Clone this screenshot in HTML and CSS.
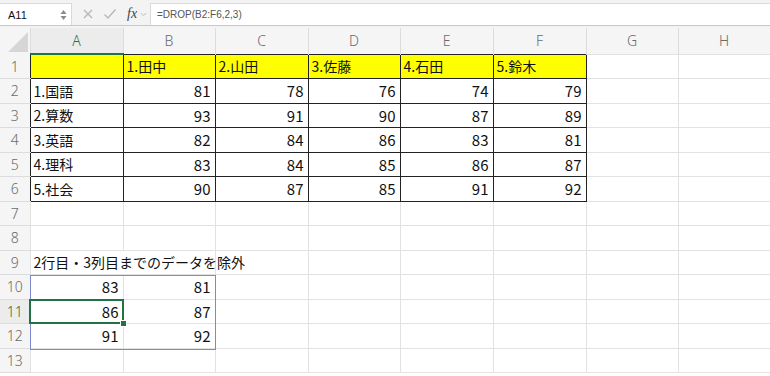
FILE: index.html
```html
<!DOCTYPE html>
<html lang="ja">
<head>
<meta charset="utf-8">
<link rel="stylesheet" href="styles.css">
</head>
<body>
<div class="toolbar">
  <div class="namebox"><span class="ref">A11</span><svg class="spin" width="7" height="12" viewBox="0 0 7 12"><path d="M3.5 1 L6.5 5 L0.5 5 Z M0.5 7 L6.5 7 L3.5 11 Z" fill="#8a8a8a"/></svg></div>
  <div class="icons">
    <svg class="ico" width="12" height="12" viewBox="0 0 12 12"><path d="M2 2 L10 10 M10 2 L2 10" stroke="#b8b8b8" stroke-width="1.4" fill="none"/></svg>
    <svg class="ico" width="14" height="12" viewBox="0 0 14 12"><path d="M1.5 6.5 L5 10 L12.5 1.5" stroke="#b8b8b8" stroke-width="1.4" fill="none"/></svg>
    <span class="fx">fx</span>
    <svg class="chev" width="7" height="5" viewBox="0 0 7 5"><path d="M1 1 L3.5 3.8 L6 1" stroke="#c0c0c0" stroke-width="1" fill="none"/></svg>
  </div>
  <div class="formula">=DROP(B2:F6,2,3)</div>
</div>
<div class="sheet">
<table class="grid">
  <colgroup>
    <col class="c-rh"><col class="c-w93"><col class="c-w92"><col class="c-w93"><col class="c-w92"><col class="c-w93"><col class="c-w93"><col class="c-w92"><col class="c-w92">
  </colgroup>
  <tr class="hdr">
    <th class="corner"><svg width="30" height="26" viewBox="0 0 30 26"><path d="M8 24 L28 24 L28 4 Z" fill="#d6d6d6"/></svg></th>
    <th class="act">A</th><th>B</th><th>C</th><th>D</th><th>E</th><th>F</th><th>G</th><th>H</th>
  </tr>
  <tr><th class="rh">1</th><td class="y b"></td><td class="y b">1.田中</td><td class="y b">2.山田</td><td class="y b">3.佐藤</td><td class="y b">4.石田</td><td class="y b">5.鈴木</td><td></td><td></td></tr>
  <tr><th class="rh">2</th><td class="b">1.国語</td><td class="b n">81</td><td class="b n">78</td><td class="b n">76</td><td class="b n">74</td><td class="b n">79</td><td></td><td></td></tr>
  <tr><th class="rh">3</th><td class="b">2.算数</td><td class="b n">93</td><td class="b n">91</td><td class="b n">90</td><td class="b n">87</td><td class="b n">89</td><td></td><td></td></tr>
  <tr><th class="rh">4</th><td class="b">3.英語</td><td class="b n">82</td><td class="b n">84</td><td class="b n">86</td><td class="b n">83</td><td class="b n">81</td><td></td><td></td></tr>
  <tr><th class="rh">5</th><td class="b">4.理科</td><td class="b n">83</td><td class="b n">84</td><td class="b n">85</td><td class="b n">86</td><td class="b n">87</td><td></td><td></td></tr>
  <tr><th class="rh">6</th><td class="b">5.社会</td><td class="b n">90</td><td class="b n">87</td><td class="b n">85</td><td class="b n">91</td><td class="b n">92</td><td></td><td></td></tr>
  <tr><th class="rh">7</th><td></td><td></td><td></td><td></td><td></td><td></td><td></td><td></td></tr>
  <tr><th class="rh">8</th><td></td><td></td><td></td><td></td><td></td><td></td><td></td><td></td></tr>
  <tr><th class="rh">9</th><td class="over"><span>2行目・3列目までのデータを除外</span></td><td class="nl"></td><td></td><td></td><td></td><td></td><td></td><td></td></tr>
  <tr><th class="rh">10</th><td class="n">83</td><td class="n">81</td><td></td><td></td><td></td><td></td><td></td><td></td></tr>
  <tr><th class="rh act">11</th><td class="n">86</td><td class="n">87</td><td></td><td></td><td></td><td></td><td></td><td></td></tr>
  <tr><th class="rh">12</th><td class="n">91</td><td class="n">92</td><td></td><td></td><td></td><td></td><td></td><td></td></tr>
  <tr><th class="rh">13</th><td></td><td></td><td></td><td></td><td></td><td></td><td></td><td></td></tr>
</table>
<div class="spill"></div>
<div class="active"><span class="handle"></span></div>
</div>
</body>
</html>
```
FILE: styles.css
```css
html, body {
  margin: 0;
  padding: 0;
  background: #ffffff;
  overflow: hidden;
}
body {
  width: 770px;
  height: 376px;
  font-family: "Noto Sans CJK JP", "Noto Sans", sans-serif;
}
.toolbar {
  background: #f3f3f3;
  border-bottom: 1px solid #c9c9c9;
  box-shadow: 0 2px 0 #f3f3f3, 0 3px 0 #d4d4d4;
  display: flex;
  align-items: stretch;
  padding-top: 3px;
  box-sizing: border-box;
  height: 26px;
  margin-bottom: 2px;
}
.namebox {
  width: 72px;
  background: #fff;
  border-top: 1px solid #dadada;
  border-right: 1px solid #dadada;
  display: flex;
  align-items: center;
  justify-content: space-between;
  box-sizing: border-box;
  padding: 0 4px 0 8px;
}
.ref {
  font-family: "Liberation Sans", sans-serif;
  font-size: 11px;
  color: #111;
}
.spin {
  display: block;
}
.icons {
  width: 78px;
  display: flex;
  align-items: center;
  padding-left: 10px;
  gap: 9px;
  box-sizing: border-box;
}
.fx {
  font-family: "Liberation Serif", serif;
  font-style: italic;
  font-size: 14px;
  color: #444;
  margin-left: 1px;
}
.chev {
  margin-left: -6px;
}
.formula {
  flex: 1;
  background: #fff;
  border-top: 1px solid #dadada;
  border-left: 1px solid #dadada;
  font-family: "Liberation Sans", sans-serif;
  font-size: 10px;
  color: #555;
  display: flex;
  align-items: center;
  padding-left: 6px;
}
.sheet {
  position: relative;
}
.grid {
  border-collapse: collapse;
  table-layout: fixed;
  width: 770px;
}
.c-rh { width: 30px; }
.c-w93 { width: 93px; }
.c-w92 { width: 92px; }
.hdr th {
  height: 25px;
  background: #f5f5f5;
  font-weight: 300;
  font-family: "Noto Sans", sans-serif;
  font-size: 14px;
  color: #6a6a6a;
  border-right: 1px solid #dcdcdc;
  border-bottom: none;
  padding: 0;
  text-align: center;
}
.hdr th.act {
  color: #217346;
  border-bottom: 2px solid #217346;
  background: #ececec;
}
.corner {
  padding: 0;
  vertical-align: bottom;
}
.corner svg {
  display: block;
}
tr {
  height: 24.5px;
}
td {
  padding: 0 3px;
  font-size: 14px;
  color: #111;
  border: 1px solid #e2e2e2;
  white-space: nowrap;
  overflow: visible;
  line-height: 1;
}
th.rh {
  background: #f5f5f5;
  font-weight: 300;
  font-family: "Noto Sans", sans-serif;
  font-size: 14px;
  color: #6a6a6a;
  text-align: center;
  padding: 0;
  border-bottom: 1px solid #dcdcdc;
  border-right: none;
}
th.rh.act {
  color: #217346;
  background: #ececec;
}
td.b {
  border: 1px solid #222;
}
td.y {
  background: #ffff00;
}
td.n {
  text-align: right;
  padding-right: 4px;
  font-size: 15px;
}
td.over {
  position: relative;
  border-right: none;
}
td.over span {
  position: absolute;
  left: 3px;
  top: 50%;
  transform: translateY(-50%);
}
td.nl {
  border-left: none;
}
.spill {
  position: absolute;
  left: 30px;
  top: 247px;
  width: 184px;
  height: 73px;
  border: 1px solid #7b8ad0;
  pointer-events: none;
}
.active {
  position: absolute;
  left: 29px;
  top: 271px;
  width: 91px;
  height: 21px;
  border: 2px solid #217346;
}
.handle {
  position: absolute;
  right: -5px;
  bottom: -5px;
  width: 5px;
  height: 5px;
  background: #217346;
  border: 1px solid #fff;
}
```
